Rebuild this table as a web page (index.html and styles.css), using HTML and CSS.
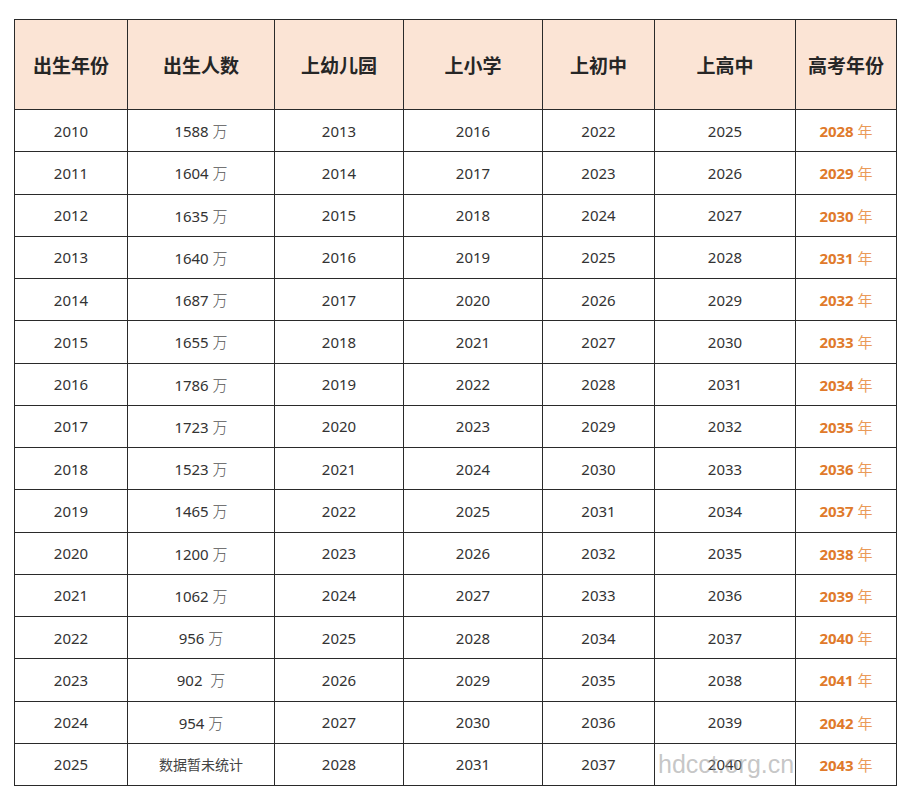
FILE: index.html
```html
<!DOCTYPE html>
<html lang="zh-CN">
<head>
<meta charset="utf-8">
<title>出生年份与高考年份</title>
<link rel="stylesheet" href="styles.css">
</head>
<body>
<div class="wrap">
<table class="grid">
<colgroup>
<col class="c1"><col class="c2"><col class="c3"><col class="c4"><col class="c5"><col class="c6"><col class="c7">
</colgroup>
<thead>
<tr><th>出生年份</th><th>出生人数</th><th>上幼儿园</th><th>上小学</th><th>上初中</th><th>上高中</th><th>高考年份</th></tr>
</thead>
<tbody>
<tr><td>2010</td><td>1588 <span class="w">万</span></td><td>2013</td><td>2016</td><td>2022</td><td>2025</td><td class="gk"><b>2028</b> 年</td></tr>
<tr><td>2011</td><td>1604 <span class="w">万</span></td><td>2014</td><td>2017</td><td>2023</td><td>2026</td><td class="gk"><b>2029</b> 年</td></tr>
<tr><td>2012</td><td>1635 <span class="w">万</span></td><td>2015</td><td>2018</td><td>2024</td><td>2027</td><td class="gk"><b>2030</b> 年</td></tr>
<tr><td>2013</td><td>1640 <span class="w">万</span></td><td>2016</td><td>2019</td><td>2025</td><td>2028</td><td class="gk"><b>2031</b> 年</td></tr>
<tr><td>2014</td><td>1687 <span class="w">万</span></td><td>2017</td><td>2020</td><td>2026</td><td>2029</td><td class="gk"><b>2032</b> 年</td></tr>
<tr><td>2015</td><td>1655 <span class="w">万</span></td><td>2018</td><td>2021</td><td>2027</td><td>2030</td><td class="gk"><b>2033</b> 年</td></tr>
<tr><td>2016</td><td>1786 <span class="w">万</span></td><td>2019</td><td>2022</td><td>2028</td><td>2031</td><td class="gk"><b>2034</b> 年</td></tr>
<tr><td>2017</td><td>1723 <span class="w">万</span></td><td>2020</td><td>2023</td><td>2029</td><td>2032</td><td class="gk"><b>2035</b> 年</td></tr>
<tr><td>2018</td><td>1523 <span class="w">万</span></td><td>2021</td><td>2024</td><td>2030</td><td>2033</td><td class="gk"><b>2036</b> 年</td></tr>
<tr><td>2019</td><td>1465 <span class="w">万</span></td><td>2022</td><td>2025</td><td>2031</td><td>2034</td><td class="gk"><b>2037</b> 年</td></tr>
<tr><td>2020</td><td>1200 <span class="w">万</span></td><td>2023</td><td>2026</td><td>2032</td><td>2035</td><td class="gk"><b>2038</b> 年</td></tr>
<tr><td>2021</td><td>1062 <span class="w">万</span></td><td>2024</td><td>2027</td><td>2033</td><td>2036</td><td class="gk"><b>2039</b> 年</td></tr>
<tr><td>2022</td><td>956 <span class="w">万</span></td><td>2025</td><td>2028</td><td>2034</td><td>2037</td><td class="gk"><b>2040</b> 年</td></tr>
<tr><td>2023</td><td>902&nbsp; <span class="w">万</span></td><td>2026</td><td>2029</td><td>2035</td><td>2038</td><td class="gk"><b>2041</b> 年</td></tr>
<tr><td>2024</td><td>954 <span class="w">万</span></td><td>2027</td><td>2030</td><td>2036</td><td>2039</td><td class="gk"><b>2042</b> 年</td></tr>
<tr><td>2025</td><td class="na">数据暂未统计</td><td>2028</td><td>2031</td><td>2037</td><td>2040</td><td class="gk"><b>2043</b> 年</td></tr>
</tbody>
</table>
<div class="watermark">hdcct.org.cn</div>
</div>
</body>
</html>
```

FILE: styles.css
```css
html, body {
  margin: 0;
  padding: 0;
  background: #ffffff;
}

body {
  padding: 19px 0 0 14px;
  font-family: "Noto Sans", "Noto Sans CJK SC", sans-serif;
  color: #333333;
}

.wrap {
  position: relative;
  width: 882px;
}

.grid {
  border-collapse: collapse;
  table-layout: fixed;
  width: 882px;
}

.c1 { width: 113px; }
.c2 { width: 147px; }
.c3 { width: 129px; }
.c4 { width: 139px; }
.c5 { width: 112px; }
.c6 { width: 141px; }
.c7 { width: 101px; }

.grid th,
.grid td {
  border: 1px solid #2a2a2a;
  text-align: center;
  vertical-align: middle;
  padding: 0;
}

.grid th {
  height: 89px;
  background: #fbe4d5;
  font-family: "Noto Sans CJK SC", sans-serif;
  font-weight: 700;
  font-size: 19px;
  color: #262626;
}

.grid td {
  height: 41.25px;
  font-size: 15px;
  color: #333333;
}

.grid td .w {
  color: #555555;
  font-weight: 300;
}

.grid td.na {
  font-family: "Noto Sans CJK SC", sans-serif;
  font-size: 14px;
  color: #444444;
}

.grid td.gk {
  color: #ea9a58;
  font-size: 15px;
}

.grid td.gk b {
  color: #e07a2b;
  font-weight: 700;
}

.watermark {
  position: absolute;
  left: 644px;
  top: 731px;
  font-family: "Liberation Sans", sans-serif;
  font-size: 25px;
  color: rgba(150, 150, 150, 0.55);
  pointer-events: none;
}
```
